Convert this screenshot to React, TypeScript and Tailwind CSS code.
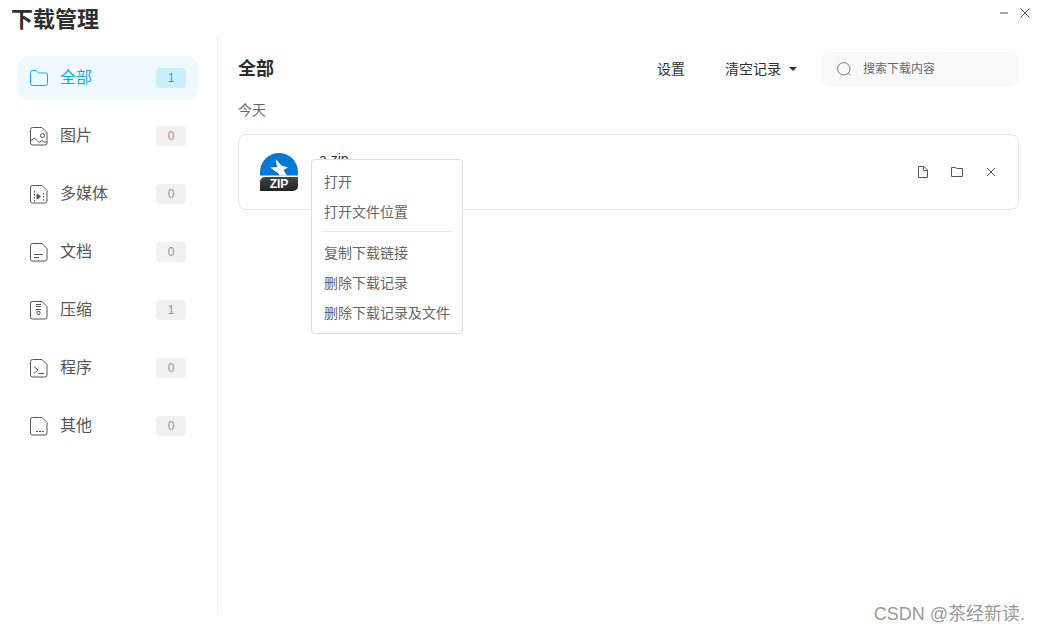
import type { ReactNode } from "react";
import clsx from "clsx";

const FileOutline = ({ children }: { children?: ReactNode }) => (
  <svg
    viewBox="0 0 20 20"
    className="h-5 w-5 shrink-0"
    fill="none"
    stroke="currentColor"
    strokeLinejoin="round"
  >
    <path d="M4 1.5H13L18 6.5V17a2 2 0 0 1-2 2H3.5a2 2 0 0 1-2-2V3.5a2 2 0 0 1 2-2Z" />
    {children}
  </svg>
);

const categories = [
  {
    label: "全部",
    count: 1,
    icon: (
      <svg viewBox="0 0 20 20" className="h-5 w-5 shrink-0" fill="none" stroke="currentColor">
        <path d="M1.5 4.5a2 2 0 0 1 2-2H7l2.5 2.5h7a2 2 0 0 1 2 2v8.5a2 2 0 0 1-2 2h-13a2 2 0 0 1-2-2Z" />
      </svg>
    ),
  },
  {
    label: "图片",
    count: 0,
    icon: (
      <FileOutline>
        <path d="M2 14.5L5.5 12L10 16.5L13 14.5L15 16H18" />
        <circle cx="13.5" cy="9.5" r="2" />
      </FileOutline>
    ),
  },
  {
    label: "多媒体",
    count: 0,
    icon: (
      <FileOutline>
        <path d="M5.5 7V18M14.5 9V18" strokeDasharray="1.5 1.5" />
        <path d="M8 10V15L11.500 12.5Z" fill="currentColor" />
      </FileOutline>
    ),
  },
  {
    label: "文档",
    count: 0,
    icon: (
      <FileOutline>
        <path d="M5 12.5H14M5 15.5H10" />
      </FileOutline>
    ),
  },
  {
    label: "压缩",
    count: 1,
    icon: (
      <FileOutline>
        <path d="M7 4.5H12M7 6.5H12M7 9.5H12" />
        <rect x="8" y="11.5" width="3" height="3" rx="1" />
      </FileOutline>
    ),
  },
  {
    label: "程序",
    count: 0,
    icon: (
      <FileOutline>
        <path d="M5 8.5L9 12L5 15.5M9.5 15.5H15" />
      </FileOutline>
    ),
  },
  {
    label: "其他",
    count: 0,
    icon: (
      <FileOutline>
        <path d="M7 15.5H15" strokeDasharray="2 1" />
      </FileOutline>
    ),
  },
];

const Sidebar = () => (
  <nav className="w-[218px] shrink-0 border-r border-[#f0f0f0] pt-5 pr-[19px] pl-[18px]">
    <ul className="flex flex-col gap-3.5">
      {categories.map((item, i) => (
        <li key={item.label}>
          <a
            href="#"
            className={clsx(
              "flex h-11 items-center gap-[11px] rounded-[10px] pr-3 pl-[11px]",
              i === 0 ? "bg-[#f0f9ff] text-[#03aef2]" : "text-[#555]"
            )}
          >
            {item.icon}
            <span className="flex-1 text-base">{item.label}</span>
            <span
              className={clsx(
                "w-[30px] rounded text-center text-xs leading-5",
                i === 0 ? "bg-[#cceffd]" : "bg-[#f1f1f1] text-[#94949c]"
              )}
            >
              {item.count}
            </span>
          </a>
        </li>
      ))}
    </ul>
  </nav>
);

const Toolbar = () => (
  <div className="flex h-[34px] items-center">
    <h2 className="flex-1 text-lg font-bold text-[#2b2b2b]">全部</h2>
    <button className="text-sm">设置</button>
    <button className="ml-10 flex items-center gap-2 text-sm" aria-haspopup="menu">
      清空记录
      <svg viewBox="0 0 8 4" className="h-1 w-2" fill="currentColor">
        <path d="M0 0H8L4 4Z" />
      </svg>
    </button>
    <label className="ml-6 flex h-full w-[198px] items-center gap-3 rounded-lg bg-[#f9f9f9] pl-4">
      <svg
        viewBox="0 0 14 14"
        className="h-3.5 w-3.5 shrink-0"
        fill="none"
        stroke="#777"
        aria-hidden="true"
      >
        <circle cx="6.8" cy="6.8" r="6.2" />
        <path d="M11.2 11.3L13 13.2" />
      </svg>
      <input
        type="text"
        aria-label="搜索下载内容"
        placeholder="搜索下载内容"
        className="min-w-0 flex-1 bg-transparent text-xs outline-none placeholder:text-[#666]"
      />
    </label>
  </div>
);

const ZipIcon = () => (
  <svg viewBox="0 0 38 38" className="h-[38px] w-[38px] shrink-0">
    <defs>
      <linearGradient id="zipBase" x1="0" y1="0" x2="0" y2="1">
        <stop offset="0" stopColor="#454545" />
        <stop offset="1" stopColor="#222" />
      </linearGradient>
    </defs>
    <path d="M0 22.5V19a19 19 0 0 1 38 0V22.5Z" fill="#0078d7" />
    <path d="M15.5 6L21.5 12.5L28 14.5L23.5 17L27 22.5H19.5L18.5 20.5L10 14.5L17 14Z" fill="#fff" />
    <path d="M5 24H38V33a5 5 0 0 1-5 5H0V29a5 5 0 0 1 5-5Z" fill="url(#zipBase)" />
    <text
      x="19"
      y="35"
      textAnchor="middle"
      fontSize="12"
      fontWeight="700"
      fill="#fff"
    >
      ZIP
    </text>
  </svg>
);

const MenuItem = ({ children }: { children: ReactNode }) => (
  <button role="menuitem" className="block h-[30px] w-full px-3 text-left text-sm">
    {children}
  </button>
);

const ContextMenu = () => (
  <div
    role="menu"
    className="absolute top-6 left-[72px] w-[152px] rounded border border-[#dedede] bg-white pt-[7px] pb-[5px] text-[#666]"
  >
    <MenuItem>打开</MenuItem>
    <MenuItem>打开文件位置</MenuItem>
    <hr className="mx-2.5 mt-1 mb-1.5 border-[#e8e8e8]" />
    <MenuItem>复制下载链接</MenuItem>
    <MenuItem>删除下载记录</MenuItem>
    <MenuItem>删除下载记录及文件</MenuItem>
  </div>
);

const DownloadItem = () => (
  <div className="relative flex h-[76px] rounded-lg border border-[#e8e8e8] pr-5 pl-[21px]">
    <div className="flex flex-1 gap-[21px] pt-[18px]">
      <ZipIcon />
      <span className="-mt-1 text-sm leading-5">a.zip</span>
    </div>
    <div className="flex items-center gap-5 text-[#555]">
      <button aria-label="打开文件">
        <svg viewBox="0 0 14 14" className="h-3.5 w-3.5" fill="none" stroke="currentColor">
          <path d="M2.5 1.5H8L11.5 5V12.5H2.5V1.5ZM7.5 1.5V5.5H11.5" />
        </svg>
      </button>
      <button aria-label="打开文件位置">
        <svg viewBox="0 0 14 14" className="h-3.5 w-3.5" fill="none" stroke="currentColor">
          <path d="M1.5 2.5H5.5L7 3.5H12.5V11.5H1.5Z" />
        </svg>
      </button>
      <button aria-label="删除">
        <svg viewBox="0 0 14 14" className="h-3.5 w-3.5" fill="none" stroke="currentColor">
          <path d="M3 3L11 11M11 3L3 11" />
        </svg>
      </button>
    </div>
    <ContextMenu />
  </div>
);

export default function App() {
  return (
    <div className="relative flex min-h-screen flex-col bg-white pb-[18px] font-['Liberation_Sans','Noto_Sans_CJK_SC',sans-serif] text-[#2f2f2f]">
      <header className="flex h-9 justify-between pt-1 pr-2 pl-[11px]">
        <h1 className="text-[22px] leading-8 font-bold">下载管理</h1>
        <div className="flex h-[18px] items-center gap-[9px] text-[#555]">
          <button aria-label="最小化">
            <svg viewBox="0 0 12 12" className="h-3 w-3" fill="none" stroke="#aaa" strokeWidth="2">
              <path d="M2 6H10" />
            </svg>
          </button>
          <button aria-label="关闭">
            <svg viewBox="0 0 12 12" className="h-3 w-3" fill="none" stroke="currentColor">
              <path d="M1.5 1.5L10.5 10.5M10.5 1.5L1.5 10.5" />
            </svg>
          </button>
        </div>
      </header>

      <div className="flex flex-1">
        <Sidebar />
        <main className="flex-1 px-5 pt-4">
          <Toolbar />
          <h3 className="my-3.5 text-sm leading-5 text-[#666]">今天</h3>
          <DownloadItem />
        </main>
      </div>

      <span className="absolute right-3.5 bottom-1 text-lg text-[#999]">CSDN @茶经新读.</span>
    </div>
  );
}
